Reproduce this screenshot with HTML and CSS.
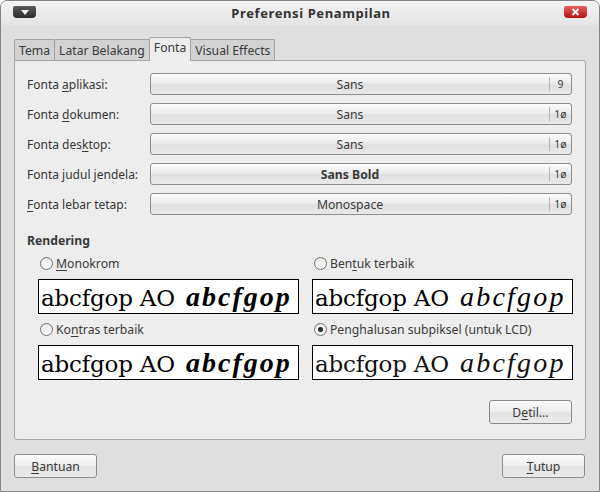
FILE: index.html
```html
<!DOCTYPE html>
<html>
<head>
<meta charset="utf-8">
<link rel="stylesheet" href="styles.css">
</head>
<body>
<div class="window">
  <div class="titlebar">
    <div class="menu-btn"><svg width="8" height="5" viewBox="0 0 8 5"><path d="M0 0H8L4 5Z" fill="#f0f0f0"/></svg></div>
    <div class="title">Preferensi Penampilan</div>
    <div class="close-btn"><svg width="9" height="8" viewBox="0 0 9 8"><path d="M1.5 1L7.5 7M7.5 1L1.5 7" stroke="#fff" stroke-width="1.8"/></svg></div>
  </div>
  <div class="tabs">
    <div class="tab">Tema</div>
    <div class="tab">Latar Belakang</div>
    <div class="tab active">Fonta</div>
    <div class="tab">Visual Effects</div>
  </div>
  <div class="panel">
    <div class="rows">
      <div class="row"><span class="label">Fonta <u>a</u>plikasi:</span><div class="fontbtn"><span class="fname">Sans</span><span class="fsize">9</span></div></div>
      <div class="row"><span class="label">Fonta <u>d</u>okumen:</span><div class="fontbtn"><span class="fname">Sans</span><span class="fsize">1ø</span></div></div>
      <div class="row"><span class="label">Fonta des<u>k</u>top:</span><div class="fontbtn"><span class="fname">Sans</span><span class="fsize">1ø</span></div></div>
      <div class="row"><span class="label">Fonta judul jendela:</span><div class="fontbtn"><span class="fname bold">Sans Bold</span><span class="fsize">1ø</span></div></div>
      <div class="row"><span class="label"><u>F</u>onta lebar tetap:</span><div class="fontbtn"><span class="fname">Monospace</span><span class="fsize">1ø</span></div></div>
    </div>
    <div class="heading">Rendering</div>
    <div class="render-grid">
      <div class="opt">
        <div class="radio-line"><span class="radio"></span><span><u>M</u>onokrom</span></div>
        <div class="preview mono">abcfgop AO <i>abcfgop</i></div>
      </div>
      <div class="opt">
        <div class="radio-line"><span class="radio"></span><span>Ben<u>t</u>uk terbaik</span></div>
        <div class="preview">abcfgop AO <i>abcfgop</i></div>
      </div>
      <div class="opt">
        <div class="radio-line"><span class="radio"></span><span>Ko<u>n</u>tras terbaik</span></div>
        <div class="preview mono">abcfgop AO <i>abcfgop</i></div>
      </div>
      <div class="opt">
        <div class="radio-line"><span class="radio checked"></span><span>Penghalusan subpiksel (untuk LCD)</span></div>
        <div class="preview lcd">abcfgop AO <i>abcfgop</i></div>
      </div>
    </div>
    <div class="detail-row"><div class="btn">D<u>e</u>til...</div></div>
  </div>
  <div class="footer">
    <div class="btn"><u>B</u>antuan</div>
    <div class="btn"><u>T</u>utup</div>
  </div>
</div>
</body>
</html>
```
FILE: styles.css
```css
* { box-sizing: border-box; }
html, body { margin: 0; padding: 0; }
body {
  width: 600px;
  height: 492px;
  overflow: hidden;
  font-family: "Noto Sans", "DejaVu Sans", sans-serif;
  font-size: 12px;
  color: #3a3a3a;
  background: #fff;
}
u { text-decoration: underline; text-underline-offset: 2px; }
.window {
  width: 600px;
  height: 492px;
  border: 1px solid #858585;
  border-radius: 7px 7px 0 0;
  background: #dfdfdf;
  display: flex;
  flex-direction: column;
}
.titlebar {
  height: 24px;
  display: flex;
  align-items: center;
  padding: 0 12px 0 12px;
  background: linear-gradient(#f4f4f4, #e4e4e4);
  border-radius: 6px 6px 0 0;
}
.menu-btn {
  width: 23px;
  height: 12px;
  margin-top: -2px;
  background: linear-gradient(#5a5a5a, #2e2e2e);
  border-radius: 2px 2px 4px 4px;
  display: flex;
  align-items: center;
  justify-content: center;
}
.title {
  flex: 1;
  text-align: center;
  font-weight: bold;
  font-size: 13px;
  letter-spacing: 0.6px;
  color: #333;
  margin-top: -1px;
  padding-left: 22px;
}
.close-btn {
  width: 23px;
  height: 12px;
  margin-top: -2px;
  background: linear-gradient(#e46060, #b81010);
  border-radius: 2px 2px 4px 4px;
  display: flex;
  align-items: center;
  justify-content: center;
}
.tabs {
  display: flex;
  align-items: flex-end;
  margin: 12px 0 0 13px;
  height: 23px;
  position: relative;
  z-index: 1;
}
.tab {
  height: 21px;
  padding: 0 4px;
  border: 1px solid #a3a3a3;
  border-bottom: none;
  border-radius: 2px 2px 0 0;
  background: #d2d2d2;
  color: #3a3a3a;
  display: flex;
  align-items: center;
  font-size: 12.2px;
  margin-right: -1px;
}
.tab.active {
  height: 24px;
  background: #ededed;
  margin-bottom: -1px;
  align-items: flex-start;
  padding-top: 1px;
}
.panel {
  margin: 0 13px 0 13px;
  height: 380px;
  border: 1px solid #a6a6a6;
  border-radius: 0 3px 3px 3px;
  background: #ededed;
  padding: 12px 13px 0 12px;
  display: flex;
  flex-direction: column;
}
.rows { display: flex; flex-direction: column; gap: 8px; }
.row { display: flex; align-items: center; height: 22px; }
.label { width: 123px; font-size: 12px; color: #363636; }
.fontbtn {
  flex: 1;
  height: 22px;
  border: 1px solid #8e8e8e;
  border-radius: 3px;
  background: linear-gradient(#fbfbfb 0%, #ececec 45%, #e0e0e0 55%, #e9e9e9 100%);
  display: flex;
  align-items: center;
}
.fname { flex: 1; text-align: center; font-size: 12.2px; color: #3a3a3a; }
.fname.bold { font-weight: bold; }
.fsize {
  width: 22px;
  text-align: center;
  font-size: 10.5px;
  border-left: 1px solid #b5b5b5;
  height: 14px;
  line-height: 14px;
}
.heading {
  font-weight: bold;
  font-size: 12.2px;
  margin-top: 18px;
  color: #3a3a3a;
  height: 16px;
  line-height: 16px;
}
.render-grid {
  display: grid;
  grid-template-columns: 261px 261px;
  column-gap: 13px;
  row-gap: 7px;
  margin-left: 11px;
  margin-top: 6px;
}
.opt { display: flex; flex-direction: column; gap: 8px; }
.radio-line {
  display: flex;
  align-items: center;
  height: 16px;
  font-size: 12.2px;
  gap: 3px;
  padding-left: 2px;
}
.radio {
  width: 13px;
  height: 13px;
  border: 1px solid #707070;
  border-radius: 50%;
  background: linear-gradient(#e8e8e8, #fcfcfc);
  position: relative;
}
.radio.checked::after {
  content: "";
  position: absolute;
  left: 3px; top: 3px;
  width: 5px; height: 5px;
  border-radius: 50%;
  background: #2a2a2a;
}
.preview {
  height: 35px;
  border: 1px solid #000;
  background: #fff;
  color: #000;
  font-family: "DejaVu Serif", serif;
  font-size: 23px;
  line-height: 33px;
  padding-left: 2px;
  white-space: nowrap;
  overflow: hidden;
  letter-spacing: -0.2px;
}
.preview i {
  font-family: "Liberation Serif", serif;
  font-style: italic;
  font-size: 28px;
  letter-spacing: 2.2px;
  margin-left: 4px;
}
.preview.mono { -webkit-font-smoothing: none; }
.preview.mono i { font-weight: bold; letter-spacing: 2px; }
.preview.lcd { color: #111; }
.detail-row {
  display: flex;
  justify-content: flex-end;
  margin-top: 20px;
}
.btn {
  width: 83px;
  height: 24px;
  border: 1px solid #8c8c8c;
  border-radius: 3px;
  background: linear-gradient(#fbfbfb 0%, #efefef 45%, #e2e2e2 55%, #ebebeb 100%);
  display: flex;
  align-items: center;
  justify-content: center;
  font-size: 12.2px;
  color: #3a3a3a;
}
.footer {
  display: flex;
  justify-content: space-between;
  margin: 14px 13px 0 13px;
}
.footer .btn:last-child { margin-right: 1px; }
```
